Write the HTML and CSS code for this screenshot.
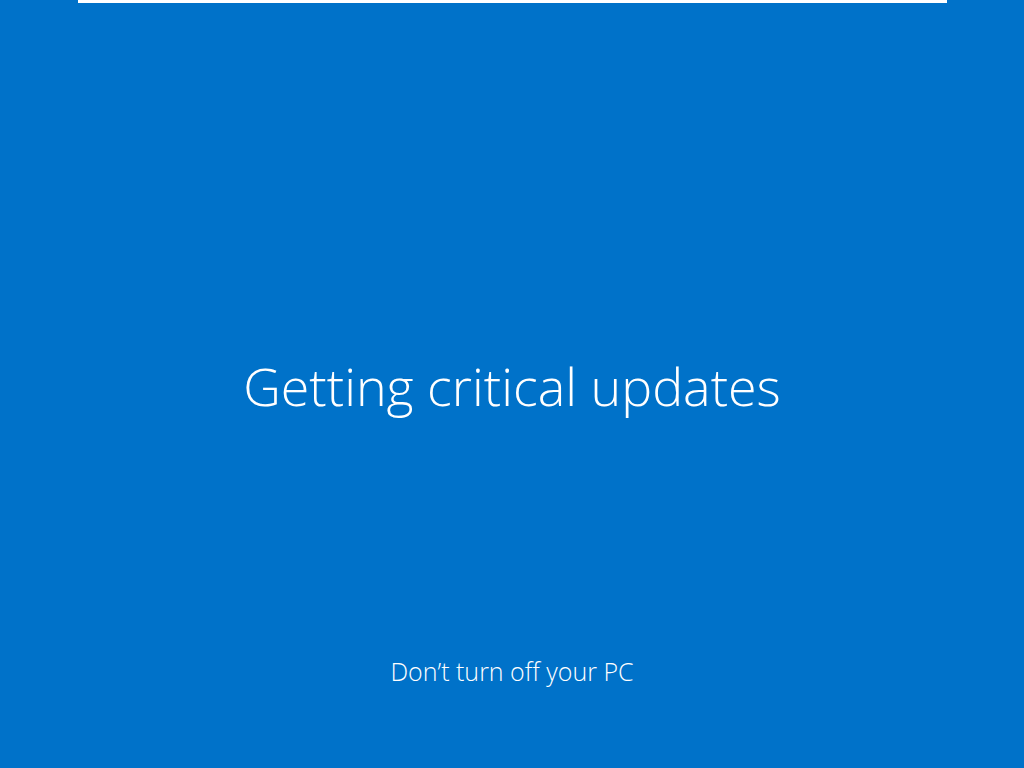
FILE: index.html
```html
<!DOCTYPE html>
<html>

<head>
    <title>Getting critical updates</title>
    <link rel="stylesheet" href="styles.css">
</head>

<body>
    <div class="screen">
        <div class="progress-bar"></div>
        <div class="status">
            <h1 class="status-title">Getting critical updates</h1>
        </div>
        <p class="status-note">Don’t turn off your PC</p>
    </div>
</body>

</html>
```

FILE: styles.css
```css
body {
    margin: 0;
    background-color: #0072c9;
    font-family: "Open Sans", "Noto Sans", sans-serif;
    color: #fff;
}

.screen {
    height: 768px;
    display: flex;
    flex-direction: column;
    align-items: center;
}

.progress-bar {
    width: 869px;
    height: 3px;
    background: #fff;
}

.status {
    height: 500px;
    display: flex;
    align-items: center;
    margin-top: 132px;
}

.status-title {
    margin: 0;
    font-size: 52px;
    font-weight: 300;
}

.status-note {
    margin: 0;
    margin-top: 19px;
    font-size: 25px;
    font-weight: 300;
}
```
